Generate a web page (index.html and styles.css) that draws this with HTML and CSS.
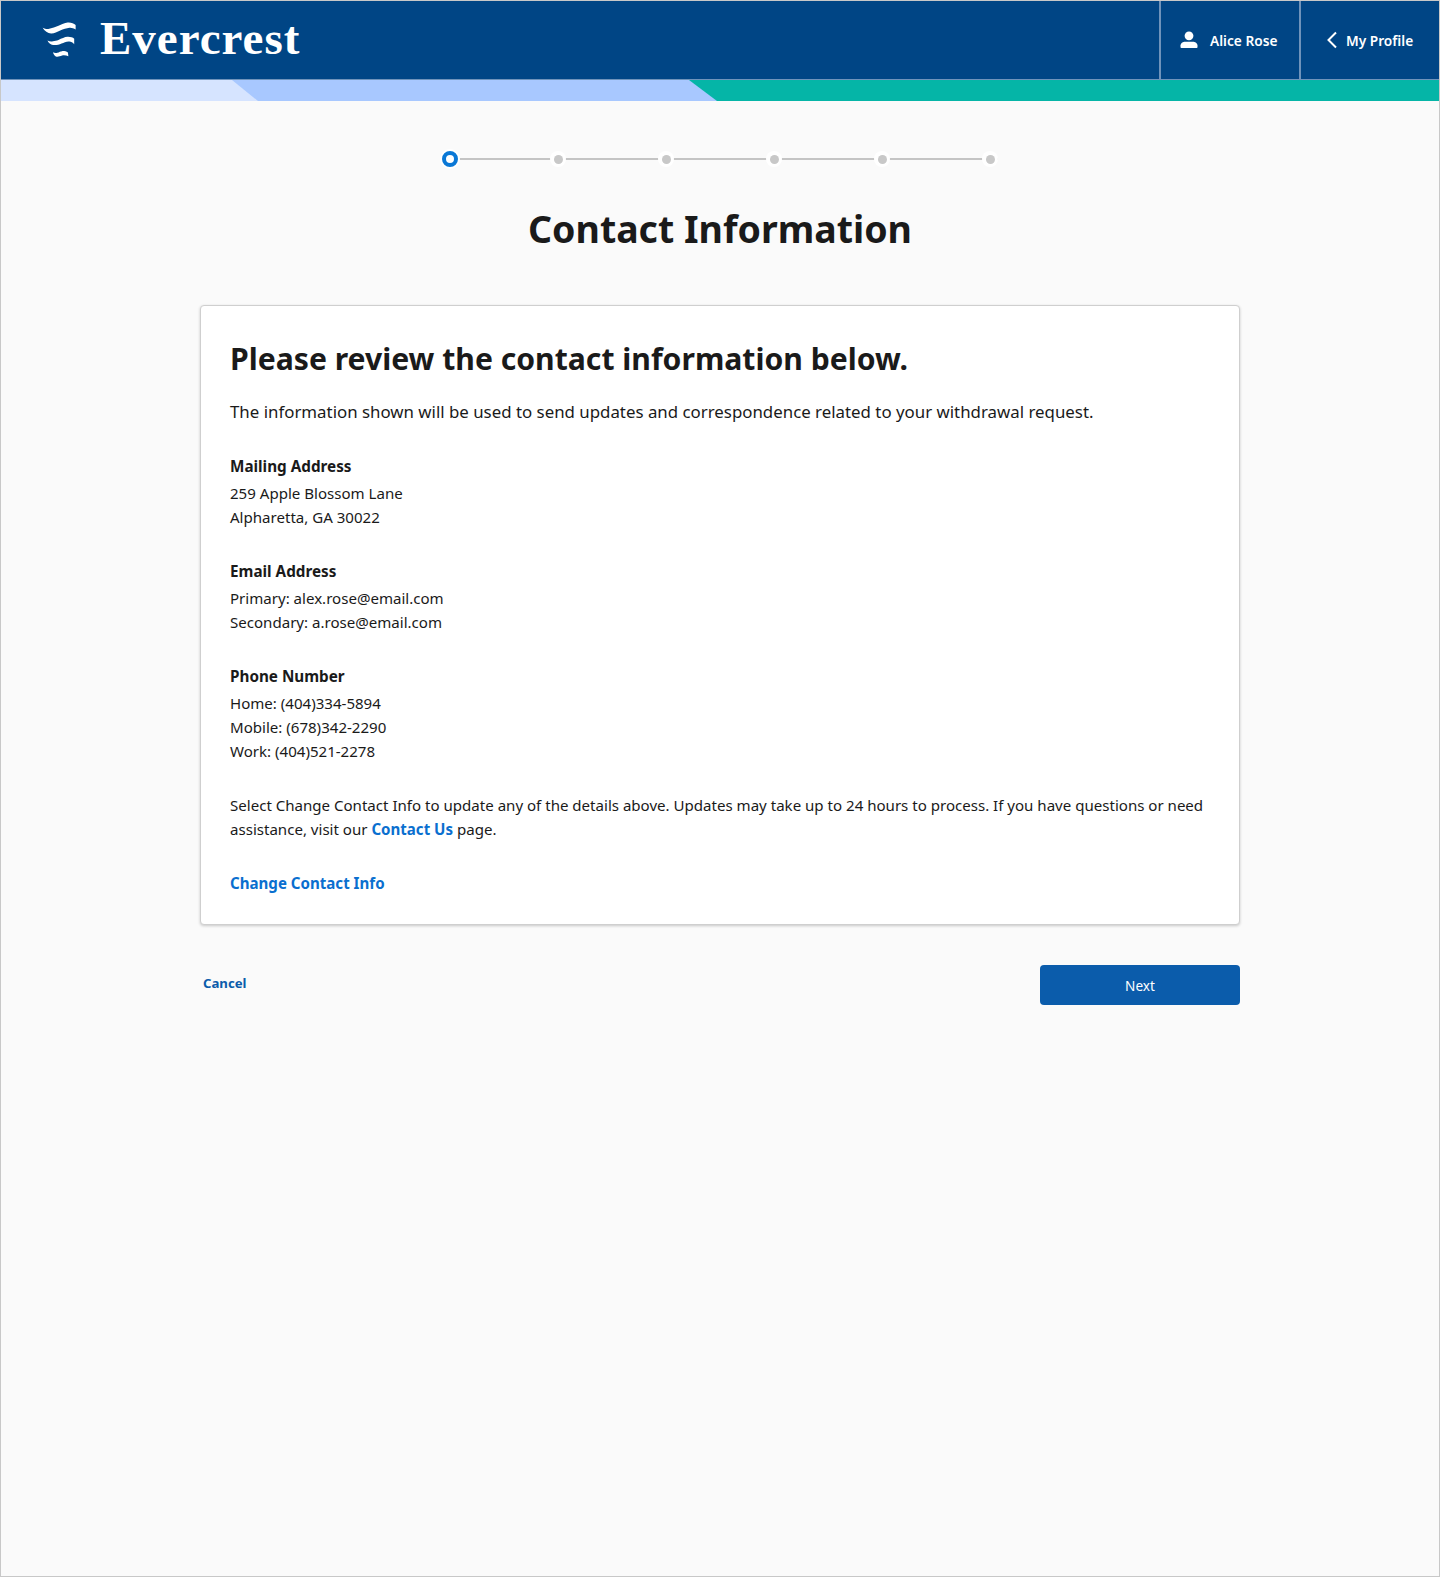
FILE: index.html
```html
<!DOCTYPE html>
<html lang="en">
<head>
<meta charset="utf-8">
<title>Contact Information</title>
<link rel="stylesheet" href="styles.css">
</head>
<body>
<div class="page">
  <header class="topbar">
    <a class="brand" href="#">
      <svg class="brand-mark" viewBox="0 0 40 40" width="44" height="44" aria-hidden="true">
        <path fill="#fff" d="M3.300 7C5.500 8.200 7.500 8.400 9.300 8C12 7.400 15 6.400 17.700 5.300C20.500 4 23.300 2.600 26 2.300C29 2 31.500 3 33.300 4.500V8.700C31.500 7.500 29.700 6.800 27.700 7C25 7.300 22 8.300 19.300 9.600C16.500 11 13.800 12.300 11 12.200C8 12 5 10 3.300 7Z"/>
        <path fill="#fff" d="M7.700 18.700C9.500 19.500 11 19.600 12.700 19.300C14.500 19 16 18.800 17.700 18.100C20.500 17 23.300 15.400 26 15.300C28.500 15.200 30.700 15.900 32 17V22C30.500 20.300 29 19.300 27 19.500C24.500 19.800 22.500 20.600 20.500 21.400C18 22.500 15.200 23.100 12.700 22.700C10.500 22.300 8.700 21 7.700 18.700Z"/>
        <path fill="#fff" d="M12.700 29.300C14 30.100 15.300 30.200 16.700 29.800C18.300 29.200 19.700 28.400 21 28.300C23 28.200 24.800 28.600 26.300 29.500L26.700 33C25 32.200 23 31.700 21 32.200C19.300 32.700 17.800 33.500 16 33.300C14.500 33.100 13.300 31.500 12.700 29.300Z"/>
      </svg>
      <span class="brand-name">Evercrest</span>
    </a>
    <nav class="topnav">
      <a class="topnav-item user" href="#">
        <svg viewBox="0 0 18 18" width="18" height="18" aria-hidden="true"><circle cx="9" cy="4.800" r="4.400" fill="#fff"/><path fill="#fff" d="M.5 16.200V14.600C.5 12 3 10.700 5.200 10.700H12.800C15 10.700 17.500 12 17.500 14.600V16.200C17.500 16.700 17.100 17 16.700 17H1.300C.9 17 .5 16.700 .5 16.200Z"/></svg>
        <span>Alice Rose</span>
      </a>
      <a class="topnav-item back" href="#">
        <svg viewBox="0 0 12 18" width="12" height="18" aria-hidden="true"><path fill="none" stroke="#fff" stroke-width="2" d="M10 1.500L2.500 9l7.500 7.500"/></svg>
        <span>My Profile</span>
      </a>
    </nav>
  </header>
  <svg class="ribbon" viewBox="0 0 1438 21" preserveAspectRatio="none" aria-hidden="true">
    <rect width="1438" height="21" fill="#05b5a7"/>
    <path d="M0 0H688L716 21H0Z" fill="#a8c8ff"/>
    <path d="M0 0H231L257 21H0Z" fill="#d6e4ff"/>
  </svg>

  <main class="content">
    <ol class="stepper">
      <li class="step current"></li>
      <li class="step"></li>
      <li class="step"></li>
      <li class="step"></li>
      <li class="step"></li>
      <li class="step"></li>
    </ol>
    <h1 class="title">Contact Information</h1>

    <section class="card">
      <h2 class="card-title">Please review the contact information below.</h2>
      <p class="lede">The information shown will be used to send updates and correspondence related to your withdrawal request.</p>
      <div class="info">
        <h3>Mailing Address</h3>
        <p>259 Apple Blossom Lane<br>Alpharetta, GA 30022</p>
      </div>
      <div class="info">
        <h3>Email Address</h3>
        <p>Primary: alex.rose@email.com<br>Secondary: a.rose@email.com</p>
      </div>
      <div class="info">
        <h3>Phone Number</h3>
        <p>Home: (404)334-5894<br>Mobile: (678)342-2290<br>Work: (404)521-2278</p>
      </div>
      <p class="note">Select Change Contact Info to update any of the details above. Updates may take up to 24 hours to process. If you have questions or need assistance, visit our <a href="#">Contact Us</a> page.</p>
      <a class="change" href="#">Change Contact Info</a>
    </section>

    <div class="actions">
      <a class="cancel" href="#">Cancel</a>
      <button class="next" type="button">Next</button>
    </div>
  </main>
</div>
</body>
</html>
```
FILE: styles.css
```css
*, *::before { box-sizing: border-box; }
html, body { margin: 0; padding: 0; }
body {
  font-family: "Noto Sans", "Open Sans", sans-serif;
  color: #1a1a1a;
  background: #fafafa;
}
a { text-decoration: none; }
.page {
  min-height: 1577px;
  border: 1px solid #c8c8c8;
  background: #fafafa;
}
.topbar {
  display: flex;
  justify-content: space-between;
  height: 78px;
  background: #004585;
}
.brand {
  display: flex;
  align-items: center;
  gap: 17px;
  padding-left: 38px;
  color: #fff;
}
.brand-mark { display: block; margin-top: 3px; }
.brand-name {
  font-family: "Liberation Serif", serif;
  font-weight: 700;
  font-size: 47px;
  letter-spacing: 1px;
  line-height: 1;
  margin-top: -3px;
}
.topnav { display: flex; }
.topnav-item {
  display: flex;
  align-items: center;
  border-left: 2px solid #6f93bb;
  color: #fff;
  font-size: 13.700px;
  font-weight: 600;
}
.user { width: 140px; gap: 12px; padding-left: 19px; }
.back { width: 140px; gap: 8px; padding-left: 25px; }
.ribbon {
  display: block;
  width: 100%;
  height: 22px;
  border-top: 1px solid #6f93bb;
}
.content {
  width: 1040px;
  margin: 0 auto;
}
.stepper {
  display: flex;
  justify-content: space-between;
  align-items: center;
  width: 556px;
  height: 20px;
  margin: 48px auto 0;
  padding: 0;
  list-style: none;
  background: linear-gradient(#c4c4c4, #c4c4c4) center / 100% 2px no-repeat;
}
.step {
  width: 16px;
  height: 16px;
  display: flex;
  align-items: center;
  justify-content: center;
  background: #fff;
  border-radius: 50%;
}
.step::before {
  content: "";
  flex: none;
  width: 9px;
  height: 9px;
  border-radius: 50%;
  background: #c8c8c8;
}
.step.current { box-shadow: 0 0 0 2px #fff; }
.step.current::before {
  width: 16px;
  height: 16px;
  background: #fff;
  border: 4px solid #0a78d6;
}
.title {
  margin: 34px 0 0;
  text-align: center;
  font-size: 37.500px;
  line-height: 52px;
  font-weight: 700;
}
.card {
  margin-top: 50px;
  padding: 30px 29px 27px;
  height: 620px;
  background: #fff;
  border: 1px solid #cfcfcf;
  border-radius: 4px;
  box-shadow: 0 1px 3px rgba(0, 0, 0, .2);
}
.card-title {
  margin: 0;
  font-size: 30.150px;
  line-height: 46px;
  font-weight: 700;
}
.lede {
  margin: 17px 0 0;
  font-size: 16.850px;
  line-height: 26px;
}
.info { margin-top: 30px; }
.info:first-of-type { margin-top: 29px; }
.info h3 {
  margin: 0 0 3px;
  font-size: 15.250px;
  line-height: 24px;
  font-weight: 700;
}
.info p, .note {
  margin: 0;
  font-size: 15.070px;
  line-height: 24px;
}
.note { margin-top: 30px; }
.note a, .change { color: #0a6fcf; font-weight: 700; }
.change {
  display: block;
  margin-top: 30px;
  font-size: 15.100px;
  line-height: 24px;
}
.actions {
  display: flex;
  justify-content: space-between;
  margin-top: 40px;
}
.cancel {
  padding: 9px 0 0 3px;
  color: #0b5cab;
  font-size: 13.200px;
  font-weight: 700;
}
.next {
  width: 200px;
  height: 40px;
  border: 0;
  border-radius: 4px;
  background: #0b5cab;
  color: #fff;
  font: 400 13.600px "Noto Sans", sans-serif;
}
```
